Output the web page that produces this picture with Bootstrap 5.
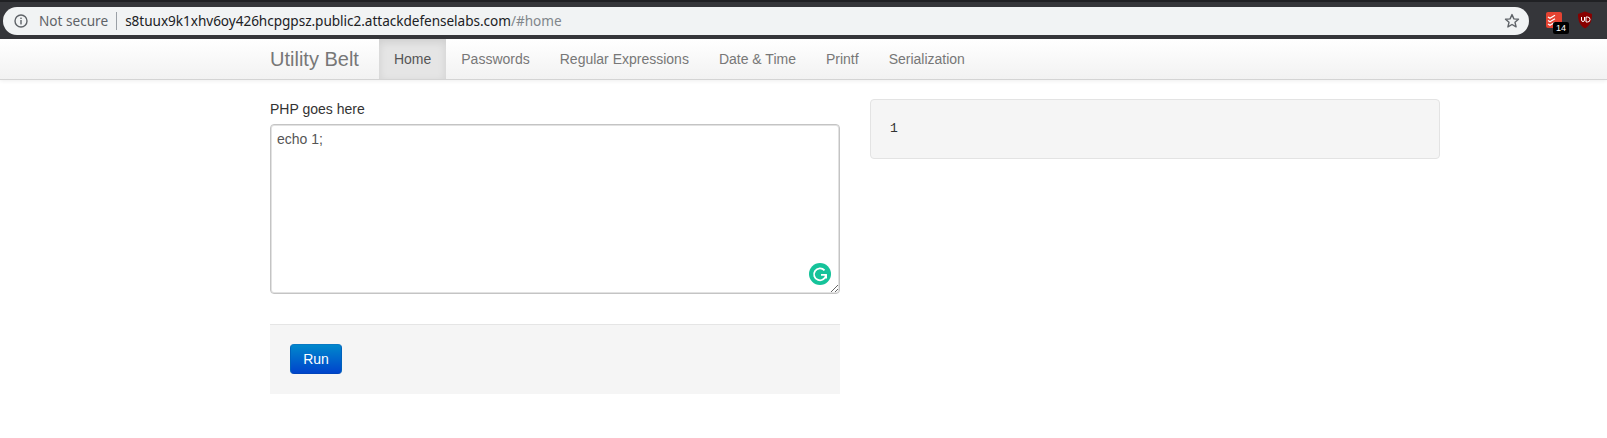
<!DOCTYPE html>
<html lang="en">
<head>
<meta charset="utf-8">
<title>Utility Belt</title>
<link href="https://cdn.jsdelivr.net/npm/bootstrap@5.3.0/dist/css/bootstrap.min.css" rel="stylesheet">
<style>
html,body{height:438px;overflow:hidden}
body{font-family:"Liberation Sans",Arial,sans-serif;font-size:14px;line-height:20px;color:#333;background:#fff}
.chrome-bar{height:39px;background:#35363a;border-top:2px solid #202124;padding:4px 0 4px 3px;gap:0}
.omni{width:1526px;height:28px;background:#f1f3f4;border-radius:14px;padding:0 9px 0 11px;font-family:"Noto Sans",sans-serif;font-size:13.6px;color:#5f6368}
.omni-sep{width:1px;height:18px;background:#9aa0a6;margin:0 8px 0 8px}
.omni-host{color:#202124;letter-spacing:-.003em}
.omni-hash{color:#80868b;letter-spacing:-.003em}
.omni-secure{margin-left:11px}
.ext-slot{position:relative;width:24px;height:24px}
.ext-first{margin-left:17px}
.ext-second{margin-left:7px}
.ext-count{position:absolute;left:7px;top:13px;width:16px;height:12px;background:#000;color:#fff;border-radius:2px;font:9px/12px "Liberation Sans",sans-serif;text-align:center}
.utility-nav{height:41px;padding:0 0 0 270px;background:linear-gradient(#fff,#f2f2f2);border-bottom:1px solid #d4d4d4;box-shadow:0 1px 4px rgba(0,0,0,.07);flex-wrap:nowrap;justify-content:flex-start}
.utility-nav .navbar-brand{font-size:20px;line-height:20px;color:#777;padding:10px 0;margin-right:20px}
.utility-nav.navbar-expand .navbar-nav .nav-link{color:#777;font-size:14px;line-height:20px;padding:10px 15px;height:40px}
.utility-nav.navbar-expand .navbar-nav .nav-link.active{color:#555;background:#e5e5e5;box-shadow:inset 0 3px 8px rgba(0,0,0,.1)}
.main-area{width:1170px;margin-left:270px;padding-top:19px;gap:30px}
.pane{width:570px}
.php-label{display:block;margin-bottom:5px;line-height:20px;color:#333}
.code-box{position:relative;height:170px}
.code-input{display:block;width:100%;height:170px;border:1px solid #c4c4c4;border-radius:4px;padding:4px 6px;font-size:14px;line-height:20px;color:#555;box-shadow:inset 0 0 0 1px #e2e2e2}
.gram{position:absolute;right:9px;bottom:9px;width:22px;height:22px}
.action-well{margin-top:30px;height:70px;background:#f5f5f5;border-top:1px solid #e5e5e5;padding:19px 20px}
.run-btn{width:52px;height:30px;padding:0;font-size:14px;line-height:20px;color:#fff;background:linear-gradient(#08c,#04c);border:1px solid #06b;border-color:#0a79c4 #0062bb #0044bb;border-radius:4px}
.out-box{margin:0;height:60px;background:#f5f5f5;border:1px solid #e3e3e3;border-radius:4px;padding:19px;font-family:"Liberation Mono",monospace;font-size:13px;line-height:20px;color:#333}
</style>
</head>
<body>
<div class="chrome-bar d-flex align-items-center">
  <div class="omni d-flex align-items-center">
    <svg width="14" height="14" viewBox="0 0 14 14"><circle cx="7" cy="7" r="6" fill="none" stroke="#5f6368" stroke-width="1.4"/><rect x="6.3" y="6" width="1.4" height="4.4" fill="#5f6368"/><rect x="6.3" y="3.6" width="1.4" height="1.4" fill="#5f6368"/></svg>
    <span class="omni-secure">Not secure</span><span class="omni-sep"></span>
    <span class="omni-host">s8tuux9k1xhv6oy426hcpgpsz.public2.attackdefenselabs.com</span><span class="omni-hash">/#home</span>
    <svg class="ms-auto" width="16" height="16" viewBox="0 0 16 16"><path d="M8 1.6l1.9 4.3 4.6.4-3.5 3 1.1 4.6L8 11.5l-4.1 2.4L5 9.3l-3.5-3 4.6-.4z" fill="none" stroke="#5f6368" stroke-width="1.4" stroke-linejoin="round"/></svg>
  </div>
  <div class="ext-slot ext-first">
    <svg width="16" height="16" viewBox="0 0 16 16"><rect width="16" height="16" y="0" rx="2" fill="#e44332"/><path d="M2 5l2 1.3 5-3M2 8.5l2 1.3 5-3M2 12l2 1.3 5-3" fill="none" stroke="#fff" stroke-width="1.3"/></svg>
    <span class="ext-count">14</span>
  </div>
  <div class="ext-slot ext-second">
    <svg width="16" height="18" viewBox="0 0 16 18"><path d="M8 .5L15 3c0 7-1.5 11-7 14.500C2.500 14 1 10 1 3z" fill="#800"/><path d="M4.500 6v3a1.500 1.500 0 0 0 3 0V6M9 6v5h1.500a2.500 2.500 0 0 0 0-5z" fill="none" stroke="#fff" stroke-width="1"/></svg>
  </div>
</div>
<nav class="navbar navbar-expand utility-nav">
  <a class="navbar-brand" href="#home">Utility Belt</a>
  <ul class="navbar-nav">
    <li class="nav-item"><a class="nav-link active" href="#home">Home</a></li>
    <li class="nav-item"><a class="nav-link" href="#passwords">Passwords</a></li>
    <li class="nav-item"><a class="nav-link" href="#regex">Regular Expressions</a></li>
    <li class="nav-item"><a class="nav-link" href="#date">Date &amp; Time</a></li>
    <li class="nav-item"><a class="nav-link" href="#printf">Printf</a></li>
    <li class="nav-item"><a class="nav-link" href="#serialization">Serialization</a></li>
  </ul>
</nav>
<div class="main-area d-flex">
  <div class="pane">
    <label class="php-label" for="php">PHP goes here</label>
    <div class="code-box">
      <textarea id="php" class="form-control code-input">echo 1;</textarea>
      <svg class="gram" viewBox="0 0 22 22"><circle cx="11" cy="11" r="11" fill="#15c39a"/><path d="M15.500 7.300A6 6 0 1 0 17 11.800h-5" fill="none" stroke="#fff" stroke-width="1.800"/><path d="M17.200 11.800v3.600" stroke="#fff" stroke-width="1.600"/></svg>
    </div>
    <div class="action-well"><button class="btn run-btn" type="button">Run</button></div>
  </div>
  <div class="pane"><pre class="out-box">1</pre></div>
</div>
<script src="https://cdn.jsdelivr.net/npm/bootstrap@5.3.0/dist/js/bootstrap.bundle.min.js"></script>
</body>
</html>
